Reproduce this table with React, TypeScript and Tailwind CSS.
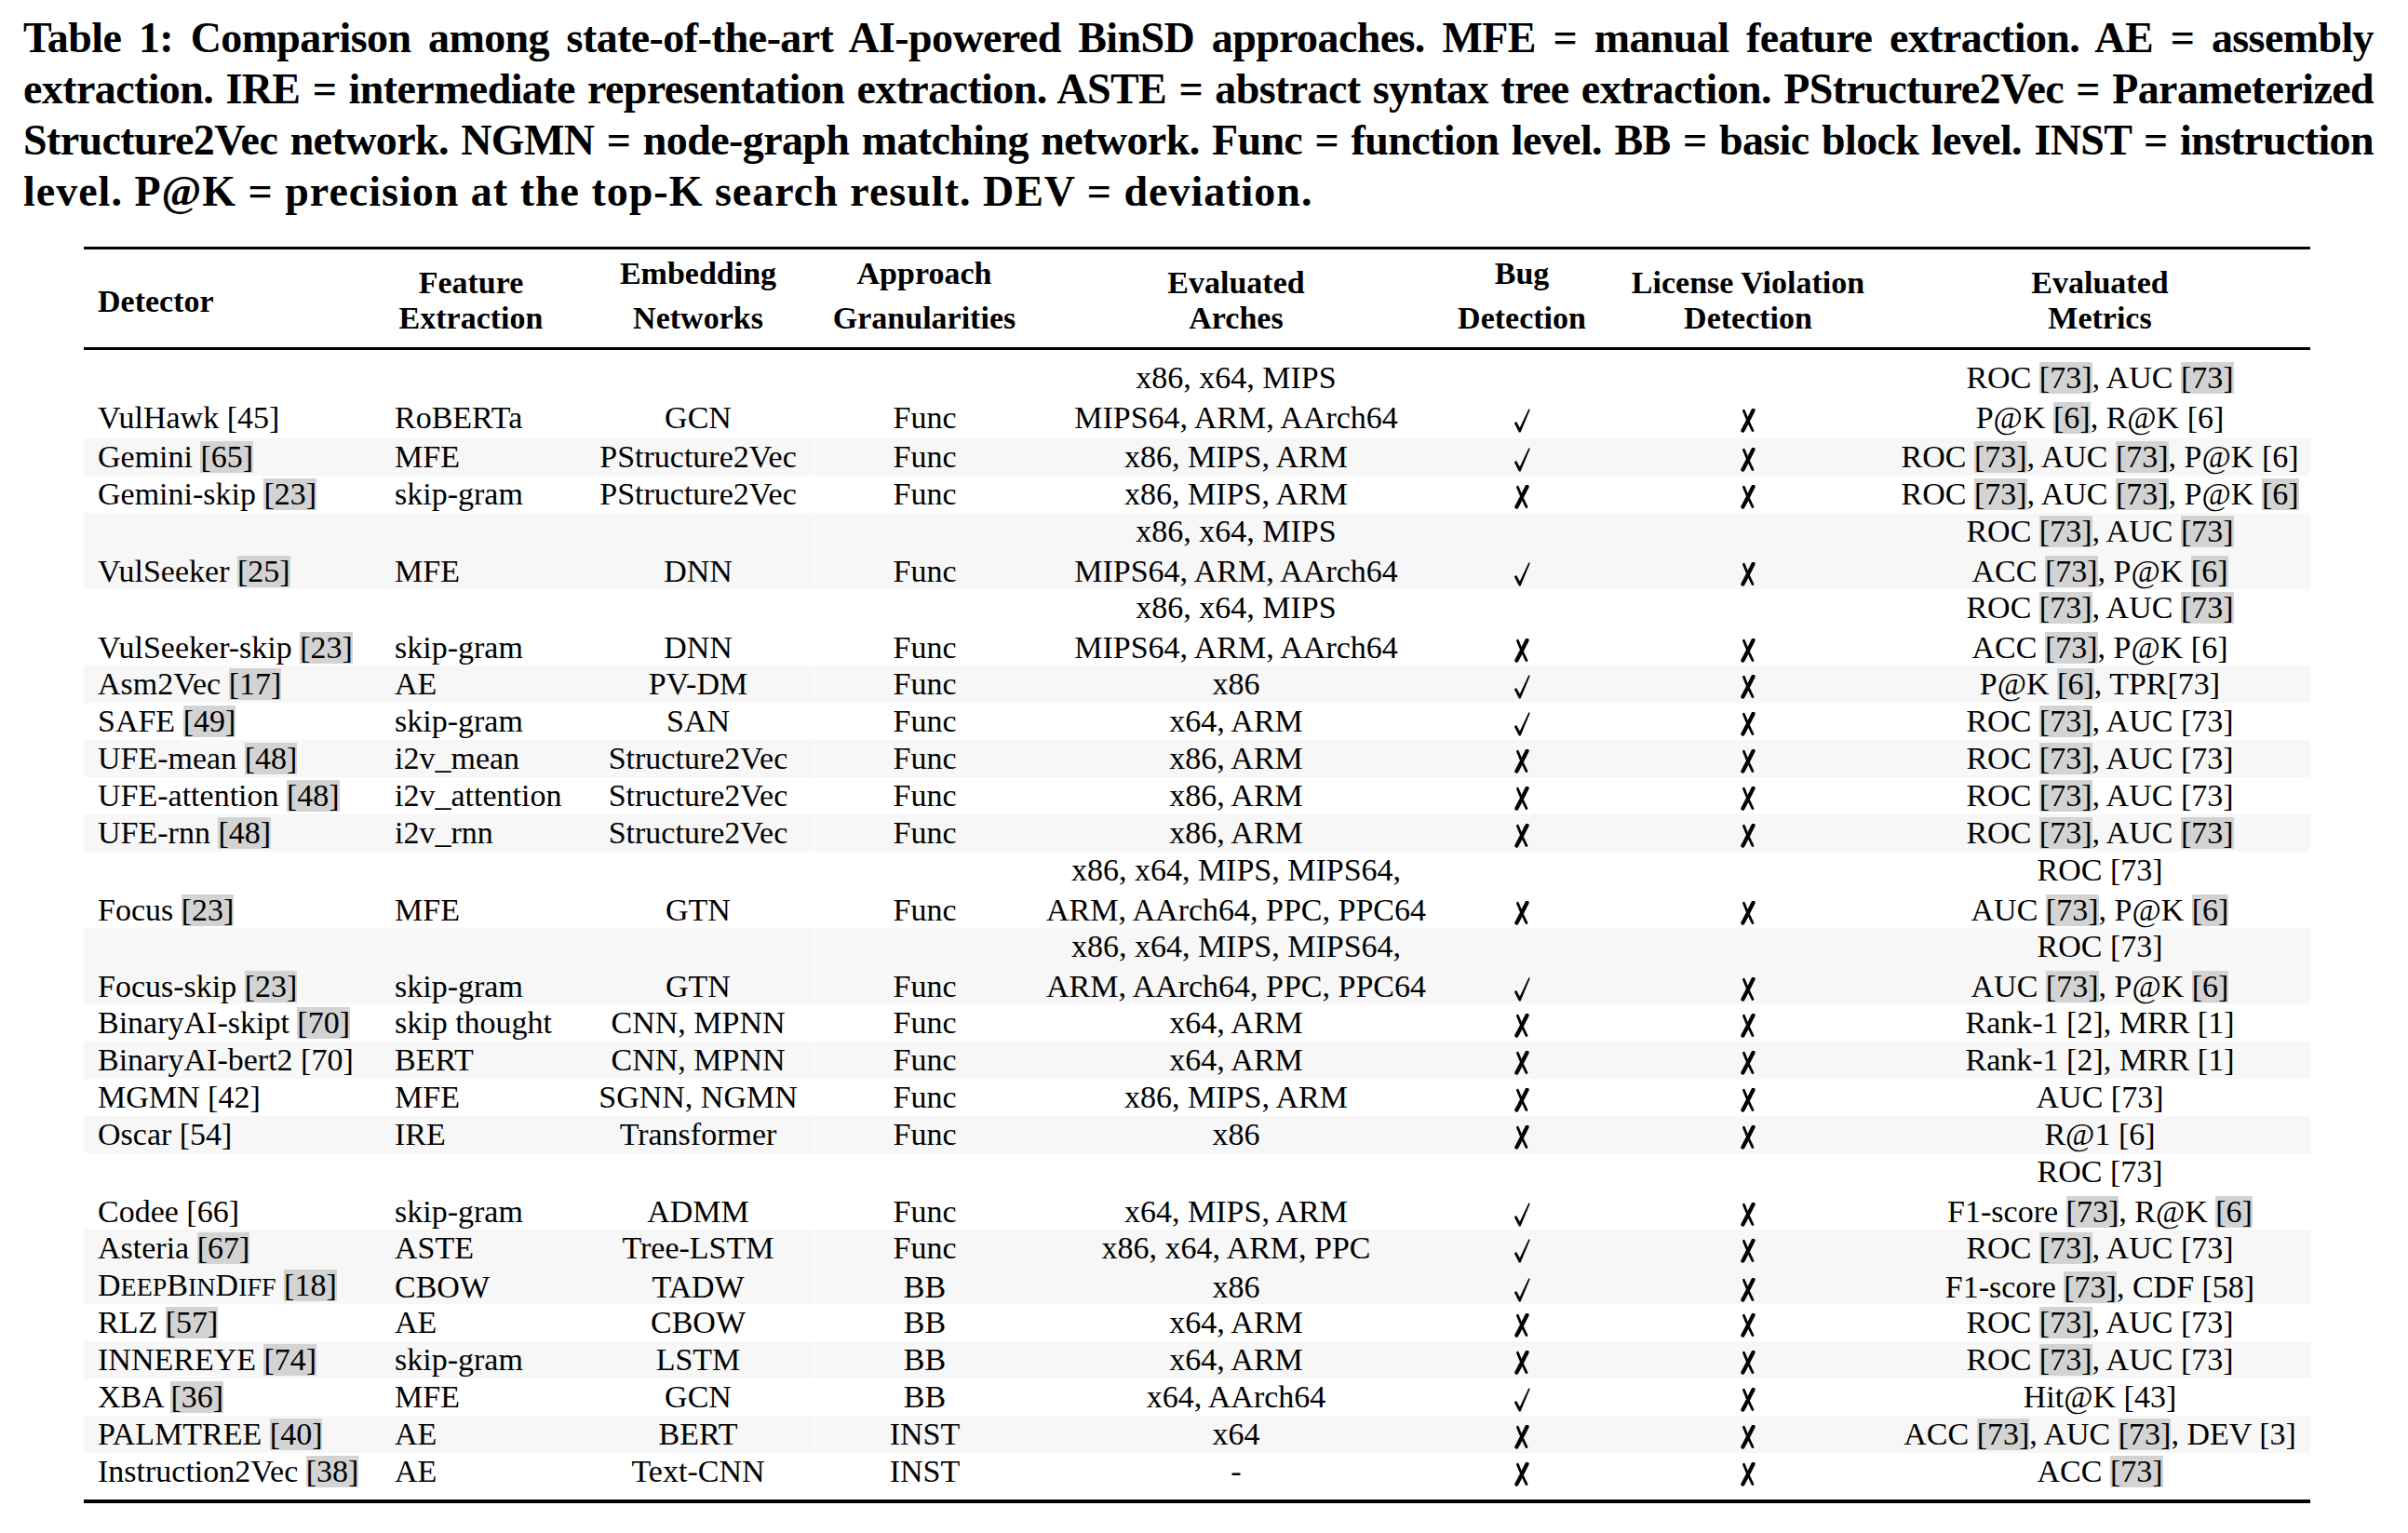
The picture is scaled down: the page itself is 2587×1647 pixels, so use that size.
import React from "react";

type Row = {
  name: string;
  fe: string;
  en: string;
  ag: string;
  arch: string[];
  bug: boolean;
  met: string[];
  s: boolean;
  sc?: boolean;
};

const X3 = "x86, x64, MIPS";
const MA = "MIPS64, ARM, AArch64";
const FOCUS = ["x86, x64, MIPS, MIPS64,", "ARM, AArch64, PPC, PPC64"];

// {n} = highlighted citation, [n] = plain citation
const ROWS: Row[] = [
  { name: "VulHawk [45]", fe: "RoBERTa", en: "GCN", ag: "Func", arch: [X3, MA], bug: true, met: ["ROC {73}, AUC {73}", "P@K {6}, R@K [6]"], s: false },
  { name: "Gemini {65}", fe: "MFE", en: "PStructure2Vec", ag: "Func", arch: ["x86, MIPS, ARM"], bug: true, met: ["ROC {73}, AUC {73}, P@K [6]"], s: true },
  { name: "Gemini-skip {23}", fe: "skip-gram", en: "PStructure2Vec", ag: "Func", arch: ["x86, MIPS, ARM"], bug: false, met: ["ROC {73}, AUC {73}, P@K {6}"], s: false },
  { name: "VulSeeker {25}", fe: "MFE", en: "DNN", ag: "Func", arch: [X3, MA], bug: true, met: ["ROC {73}, AUC {73}", "ACC {73}, P@K {6}"], s: true },
  { name: "VulSeeker-skip {23}", fe: "skip-gram", en: "DNN", ag: "Func", arch: [X3, MA], bug: false, met: ["ROC {73}, AUC {73}", "ACC {73}, P@K [6]"], s: false },
  { name: "Asm2Vec {17}", fe: "AE", en: "PV-DM", ag: "Func", arch: ["x86"], bug: true, met: ["P@K {6}, TPR[73]"], s: true },
  { name: "SAFE {49}", fe: "skip-gram", en: "SAN", ag: "Func", arch: ["x64, ARM"], bug: true, met: ["ROC {73}, AUC [73]"], s: false },
  { name: "UFE-mean {48}", fe: "i2v_mean", en: "Structure2Vec", ag: "Func", arch: ["x86, ARM"], bug: false, met: ["ROC {73}, AUC [73]"], s: true },
  { name: "UFE-attention {48}", fe: "i2v_attention", en: "Structure2Vec", ag: "Func", arch: ["x86, ARM"], bug: false, met: ["ROC {73}, AUC [73]"], s: false },
  { name: "UFE-rnn {48}", fe: "i2v_rnn", en: "Structure2Vec", ag: "Func", arch: ["x86, ARM"], bug: false, met: ["ROC {73}, AUC {73}"], s: true },
  { name: "Focus {23}", fe: "MFE", en: "GTN", ag: "Func", arch: FOCUS, bug: false, met: ["ROC [73]", "AUC {73}, P@K {6}"], s: false },
  { name: "Focus-skip {23}", fe: "skip-gram", en: "GTN", ag: "Func", arch: FOCUS, bug: true, met: ["ROC [73]", "AUC {73}, P@K {6}"], s: true },
  { name: "BinaryAI-skipt {70}", fe: "skip thought", en: "CNN, MPNN", ag: "Func", arch: ["x64, ARM"], bug: false, met: ["Rank-1 [2], MRR [1]"], s: false },
  { name: "BinaryAI-bert2 [70]", fe: "BERT", en: "CNN, MPNN", ag: "Func", arch: ["x64, ARM"], bug: false, met: ["Rank-1 [2], MRR [1]"], s: true },
  { name: "MGMN [42]", fe: "MFE", en: "SGNN, NGMN", ag: "Func", arch: ["x86, MIPS, ARM"], bug: false, met: ["AUC [73]"], s: false },
  { name: "Oscar [54]", fe: "IRE", en: "Transformer", ag: "Func", arch: ["x86"], bug: false, met: ["R@1 [6]"], s: true },
  { name: "Codee [66]", fe: "skip-gram", en: "ADMM", ag: "Func", arch: ["x64, MIPS, ARM"], bug: true, met: ["ROC [73]", "F1-score {73}, R@K {6}"], s: false },
  { name: "Asteria {67}", fe: "ASTE", en: "Tree-LSTM", ag: "Func", arch: ["x86, x64, ARM, PPC"], bug: true, met: ["ROC {73}, AUC [73]"], s: true },
  { name: " {18}", sc: true, fe: "CBOW", en: "TADW", ag: "BB", arch: ["x86"], bug: true, met: ["F1-score {73}, CDF [58]"], s: true },
  { name: "RLZ {57}", fe: "AE", en: "CBOW", ag: "BB", arch: ["x64, ARM"], bug: false, met: ["ROC {73}, AUC [73]"], s: false },
  { name: "INNEREYE {74}", fe: "skip-gram", en: "LSTM", ag: "BB", arch: ["x64, ARM"], bug: false, met: ["ROC {73}, AUC [73]"], s: true },
  { name: "XBA {36}", fe: "MFE", en: "GCN", ag: "BB", arch: ["x64, AArch64"], bug: true, met: ["Hit@K [43]"], s: false },
  { name: "PALMTREE {40}", fe: "AE", en: "BERT", ag: "INST", arch: ["x64"], bug: false, met: ["ACC {73}, AUC {73}, DEV [3]"], s: true },
  { name: "Instruction2Vec {38}", fe: "AE", en: "Text-CNN", ag: "INST", arch: ["-"], bug: false, met: ["ACC {73}"], s: false },
];

const GRID = "grid grid-cols-[319px_217px_248px_238px_432px_182px_304px_452px]";

const HEADERS: { lines: string[]; desc?: boolean; cls?: string }[] = [
  { lines: ["Feature", "Extraction"], cls: "pr-[23px]" },
  { lines: ["Embedding", "Networks"], desc: true },
  { lines: ["Approach", "Granularities"], desc: true },
  { lines: ["Evaluated", "Arches"] },
  { lines: ["Bug", "Detection"], desc: true },
  { lines: ["License Violation", "Detection"] },
  { lines: ["Evaluated", "Metrics"] },
];

function Rich({ text }: { text: string }) {
  const parts = text.split(/(\{[^}]*\})/);
  return (
    <>
      {parts.map((p, i) =>
        p.startsWith("{") ? (
          <span key={i} className="inline-block bg-[#d3d3d3] leading-[34px]">
            [{p.slice(1, -1)}]
          </span>
        ) : (
          <span key={i}>{p}</span>
        )
      )}
    </>
  );
}

// DeepBinDiff in small caps, with the lower letters drawn as smaller capitals
function DeepBinDiff() {
  return (
    <span>
      D<span className="text-[28px]">EEP</span>B<span className="text-[28px]">IN</span>D
      <span className="text-[28px]">IFF</span>
    </span>
  );
}

function Check() {
  return (
    <svg viewBox="0 0 18 26" className="inline-block h-[26px] w-[18px]">
      <path d="M0.8 15.6 L3.1 14.1 L6.8 20.6 L16.4 0.3 L17.8 1.0 L7.6 25.6 L5.9 25.6 Z" fill="black" />
    </svg>
  );
}

function Cross() {
  return (
    <svg viewBox="0 0 18 26" className="inline-block h-[26px] w-[18px]">
      <path d="M4.4 2.2 C 7 9, 10.4 16.6, 14 23.6" stroke="black" strokeWidth="2.8" strokeLinecap="round" fill="none" />
      <path d="M14.6 1.8 C 11.2 8.6, 7.4 16.2, 3.4 23.6" stroke="black" strokeWidth="4.2" strokeLinecap="round" fill="none" />
    </svg>
  );
}

function Cell({
  lines,
  double,
  className = "",
}: {
  lines: React.ReactNode[];
  double: boolean;
  className?: string;
}) {
  return (
    <div className={`flex flex-col justify-end ${double ? "pb-[2px] gap-[3px]" : ""} ${className}`}>
      {lines.map((l, i) => (
        <div key={i} className="leading-[40px] whitespace-nowrap">
          {l}
        </div>
      ))}
    </div>
  );
}

export default function App() {
  return (
    <div className="min-h-screen w-full bg-white text-black font-['Liberation_Serif',serif]">
      {/* Caption */}
      <div className="pl-[25px] pr-[37px] pt-[13px] text-[46px] font-bold leading-[55px]">
        <div className="text-justify [text-align-last:justify] tracking-[-0.6px]">
          Table 1: Comparison among state-of-the-art AI-powered BinSD approaches. MFE = manual feature extraction. AE = assembly
        </div>
        <div className="text-justify [text-align-last:justify] tracking-[-0.6px]">
          extraction. IRE = intermediate representation extraction. ASTE = abstract syntax tree extraction. PStructure2Vec = Parameterized
        </div>
        <div className="text-justify [text-align-last:justify] tracking-[-0.6px]">
          Structure2Vec network. NGMN = node-graph matching network. Func = function level. BB = basic block level. INST = instruction
        </div>
        <div className="tracking-[1px]">level. P@K = precision at the top-K search result. DEV = deviation.</div>
      </div>

      {/* Table */}
      <div className="ml-[90px] mt-[32px] w-[2392px] text-[34px]">
        <div className="h-[3px] bg-black" />

        <div className={`${GRID} h-[105px] font-bold`}>
          <div className="flex items-end pb-[30px] pl-[15px] leading-[38px]">Detector</div>
          {HEADERS.map((h, i) => (
            <div key={i} className={`flex flex-col items-center justify-end pb-[12px] ${h.cls ?? ""}`}>
              <div className={`leading-[38px] whitespace-nowrap ${h.desc ? "mb-[10px]" : ""}`}>{h.lines[0]}</div>
              <div className="leading-[38px] whitespace-nowrap">{h.lines[1]}</div>
            </div>
          ))}
        </div>

        <div className="h-[3px] bg-black" />

        {ROWS.map((r, i) => {
          const double = r.arch.length > 1 || r.met.length > 1;
          const h = i === 0 ? "h-[95px]" : double ? "h-[82px]" : "h-[40px]";
          return (
            <div key={r.name} className={`${GRID} ${h} ${r.s ? "bg-[#f7f7f7]" : ""}`}>
              <Cell
                double={double}
                className="pl-[15px]"
                lines={[
                  <>
                    {r.sc && <DeepBinDiff />}
                    <Rich text={r.name} />
                  </>,
                ]}
              />
              <Cell double={double} className="pl-[15px]" lines={[r.fe]} />
              <Cell double={double} className="items-center" lines={[r.en]} />
              <Cell double={double} className="items-center border-l border-white" lines={[r.ag]} />
              <Cell double={double} className="items-center" lines={r.arch} />
              <Cell double={double} className="items-center" lines={[r.bug ? <Check /> : <Cross />]} />
              <Cell double={double} className="items-center" lines={[<Cross />]} />
              <Cell double={double} className="items-center" lines={r.met.map((m, k) => <Rich key={k} text={m} />)} />
            </div>
          );
        })}

        <div className="mt-[10px] h-[4px] bg-black" />
      </div>
    </div>
  );
}
